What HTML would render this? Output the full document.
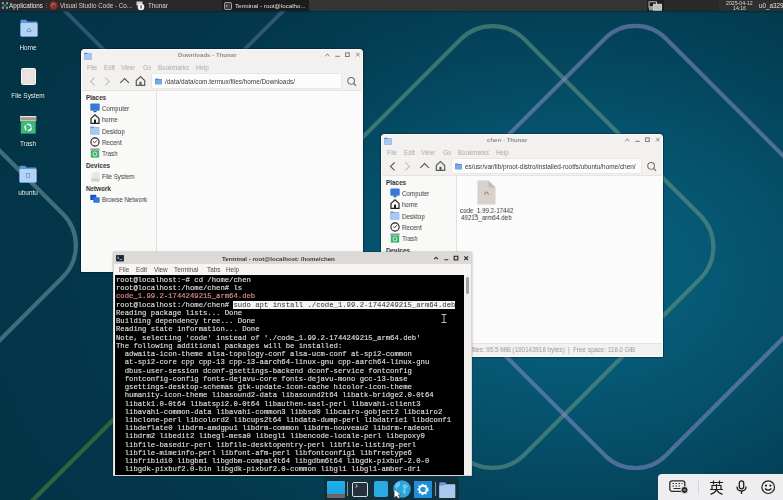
<!DOCTYPE html><html><head><meta charset="utf-8"><style>
*{margin:0;padding:0;box-sizing:border-box}
html,body{width:783px;height:500px;overflow:hidden}
body{position:relative;font-family:"Liberation Sans",sans-serif;background:#043a50;-webkit-font-smoothing:antialiased}
.a{position:absolute}
svg{position:absolute;overflow:visible}
#bg{position:absolute;left:0;top:0;width:783px;height:500px;background:radial-gradient(ellipse 420px 300px at 570px 275px,#06617f 0%,#065a76 30%,#054f69 55%,#04455c 75%,#033c50 95%,#033649 120%,#023446 150%)}
#panel{position:absolute;left:0;top:0;width:783px;height:10.6px;background:linear-gradient(90deg,#2a292a 0,#2a292a 309px,#343434 309px,#343434 647px,#1f1f1f 647px,#1f1f1f 664px,#292929 664px,#292929 719px,#2f2f31 719px);box-shadow:0 .8px 1.5px rgba(0,0,0,.55);color:#e8e8e8;line-height:11px;white-space:nowrap}
#panel span{will-change:transform;position:absolute;top:0}
.dl{will-change:transform;position:absolute;color:#eef2f4;font-size:6.4px;text-align:center;width:60px;line-height:8px;text-shadow:0 0 1.5px rgba(0,0,0,.6)}
.win{position:absolute;background:#f3f1ef;border:1px solid #fbfbfb;border-radius:3px 3px 0 0;overflow:hidden;box-shadow:0 0 0 .6px rgba(0,10,20,.45),0 0 2px rgba(0,0,0,.3)}
.win .t{will-change:transform;position:absolute;top:-1.9px;height:13px;line-height:14px;font-size:6.1px;font-weight:bold;color:#8e8b89;white-space:nowrap}
.win .m{will-change:transform;position:absolute;top:11.5px;height:11px;line-height:11px;font-size:6.9px;color:#aba9a7;white-space:nowrap;transform:scaleX(.9);transform-origin:0 50%}
.side{position:absolute;left:0;top:40px;width:75px;bottom:0;background:#f9f9f8;border-right:1px solid #e3e1df;border-top:1px solid #e6e3e0}
.cont{position:absolute;left:75px;top:40px;right:0;bottom:0;background:#fbfbfb;border-top:1px solid #e6e3e0}
.s{will-change:transform;position:absolute;font-size:6.9px;line-height:8px;white-space:nowrap;color:#3a3a3a;transform:scaleX(.9);transform-origin:0 50%}
.h{font-weight:bold;color:#2b2b2b;font-size:6.9px;transform:scaleX(.92)}
.loc{position:absolute;height:15px;background:#fcfcfc;border:1px solid #e9e6e3;border-radius:2px;overflow:hidden}
.loc span{will-change:transform;position:absolute;top:0;line-height:15px;font-size:6.42px;color:#3a3a3a;white-space:nowrap}
#term{position:absolute;left:113px;top:252px;width:359px;height:224px;background:#f6f5f4;border:1px solid #d9d6d3;border-radius:2px 2px 0 0;overflow:hidden;box-shadow:0 0 2px rgba(0,0,0,.4)}
#tt{position:absolute;left:0;right:0;top:0;height:11px;background:#dcd9d6}
#tt span{will-change:transform;position:absolute;top:0;line-height:12.5px;font-size:6.12px;font-weight:bold;color:#3c3c3c;white-space:nowrap}
#tm span{will-change:transform;position:absolute;top:11px;line-height:12px;font-size:6.4px;color:#4d4d4d;white-space:nowrap}
#tb{position:absolute;left:1px;top:22px;width:349px;height:200px;background:#000;overflow:hidden}
pre{will-change:transform;position:absolute;left:0.7px;top:1.3px;font-family:"Liberation Mono",monospace;font-size:7.25px;line-height:8.24px;color:#e0e0e0;-webkit-text-stroke:0.2px rgba(224,224,224,.6)}
.red{color:#e46a6e}
.sel{background:#f4f4f4;color:#000}
</style></head><body>
<div id="bg"></div>
<svg style="left:0;top:0" width="783" height="500" viewBox="0 0 783 500"><g fill="none" stroke-width="4.2">
<path stroke="#6a9a88" stroke-opacity="0.55" d="M460.7,39.3 A45.0,45.0 0 0 1 524.3,39.3 L700.2,215.2 A45.0,45.0 0 0 1 700.2,278.8 L524.3,454.7 A45.0,45.0 0 0 1 460.7,454.7 L284.8,278.8 A45.0,45.0 0 0 1 284.8,215.2 Z"/>
<path stroke="#8a8cc8" stroke-opacity="0.55" d="M605.0,38.4 A43.0,43.0 0 0 1 665.8,38.4 L843.9,216.5 A43.0,43.0 0 0 1 843.9,277.3 L665.8,455.4 A43.0,43.0 0 0 1 605.0,455.4 L426.9,277.3 A43.0,43.0 0 0 1 426.9,216.5 Z"/>
<path stroke="#7aa6b4" stroke-opacity="0.5" d="M-175.3,39.3 A45.0,45.0 0 0 1 -111.7,39.3 L62.7,213.7 A45.0,45.0 0 0 1 62.7,277.3 L-111.7,451.7 A45.0,45.0 0 0 1 -175.3,451.7 L-349.7,277.3 A45.0,45.0 0 0 1 -349.7,213.7 Z"/>
<path stroke="#7f8cc0" stroke-opacity="0.36" stroke-width="4" d="M20,-34 L142.2,88.2 A45.0,45.0 0 0 0 205.8,88.2 L330,-36"/>
<path stroke="#2f6242" stroke-opacity="1" d="M-10,543 L300,233"/>
</g></svg>
<div id="panel">
  <svg style="left:1px;top:1px" width="8" height="9" viewBox="0 0 8 9">
    <path d="M1,1.5 Q2.2,0.5 3.2,2 L2.6,3.4 Q1.4,3.6 0.8,3 Z M7,1.5 Q5.8,0.5 4.8,2 L5.4,3.4 Q6.6,3.6 7.2,3 Z M1,7.5 Q2.2,8.5 3.2,7 L2.6,5.6 Q1.4,5.4 0.8,6 Z M7,7.5 Q5.8,8.5 4.8,7 L5.4,5.6 Q6.6,5.4 7.2,6 Z" fill="#5fb3c7"/>
    <rect x="2.6" y="3.8" width="2.8" height="1.4" fill="#3a7f95"/>
  </svg>
  <span style="left:9px;font-size:6.3px">Applications</span>
  <span style="left:44px;font-size:5px;color:#999">&#8942;</span>
  <svg style="left:48.5px;top:1px" width="9" height="9" viewBox="0 0 9 9"><circle cx="4.5" cy="4.6" r="4.3" fill="#7a3026"/><circle cx="4.3" cy="4.2" r="2.4" fill="#b0584a"/><circle cx="4.6" cy="5" r="1" fill="#5a2018"/></svg>
  <span style="left:60px;font-size:6.28px;color:#cfcfcf">Visual Studio Code - Co...</span>
  <svg style="left:136px;top:1px" width="9" height="10" viewBox="0 0 9 10"><rect x="0.5" y="0.5" width="6" height="4" fill="#cfd3d8"/><circle cx="5" cy="6" r="3.3" fill="#f2f2f2"/><rect x="4.5" y="4.3" width="1.1" height="3.2" fill="#333"/></svg>
  <span style="left:148px;font-size:6.28px;color:#d6d6d6">Thunar</span>
  <div class="a" style="left:221.5px;top:0;width:87.5px;height:10.6px;background:#1d1c1d"></div>
  <svg style="left:224px;top:2px" width="8" height="8" viewBox="0 0 8 8"><rect x="0.5" y="0.5" width="7" height="7" rx="1" fill="#3c3c3c" stroke="#bbb" stroke-width="0.8"/><path d="M2,3 L3.3,4 L2,5" stroke="#ddd" stroke-width="0.7" fill="none"/></svg>
  <span style="left:235px;font-size:6.2px;color:#e0e0e0">Terminal - root@localho...</span>
  <svg style="left:648px;top:1px" width="15" height="10" viewBox="0 0 15 10"><rect x="1" y="0.8" width="7.5" height="5.5" fill="none" stroke="#cfcfcf" stroke-width="0.9"/><rect x="5.5" y="3.2" width="8" height="6" fill="#bdbdbd" stroke="#e4e4e4" stroke-width="0.8"/><rect x="1" y="5" width="4" height="4.3" fill="#9a9a9a"/></svg>
  
  <span style="left:726px;top:-2.5px;font-size:5.2px;color:#d8d8d8">2025-04-12</span>
  <span style="left:733px;top:2.6px;font-size:5.2px;color:#d8d8d8">14:16</span>
  <span style="left:759px;font-size:6.3px;color:#e0e0e0">u0_a329</span>
</div>
<svg style="left:19.5px;top:19.2px" width="18" height="18" viewBox="0 0 18 18"><path d="M0.5,2 Q0.5,0.8 1.7,0.8 L6,0.8 L7.5,2.5 L16.5,2.5 Q17.5,2.5 17.5,3.5 L17.5,16.5 Q17.5,17.5 16.5,17.5 L1.5,17.5 Q0.5,17.5 0.5,16.5 Z" fill="#5b95de"/><rect x="0.5" y="4" width="17" height="13.5" rx="1" fill="#b3d2f6"/><path d="M7,11 Q9,8 11,11 L11,12.5 L7,12.5 Z" fill="none" stroke="#5f8fc8" stroke-width="0.8"/></svg>
<div class="dl" style="left:-2px;top:43.6px">Home</div>
<div class="a" style="left:20.7px;top:67.6px;width:15.2px;height:17.4px;background:radial-gradient(circle at 50% 45%,#eee6e2,#e2ddd8);border:1px solid #fbfbfb;border-radius:1.5px"></div>
<div class="dl" style="left:-2px;top:91.6px">File System</div>
<svg style="left:20px;top:116px" width="16.5" height="18" viewBox="0 0 16.5 18"><rect x="0" y="0" width="16.3" height="5" fill="#e8e4e2"/><rect x="0.3" y="1.2" width="15.7" height="3.3" fill="#a59690"/><rect x="0.8" y="5" width="14.9" height="12.6" fill="#3cb878"/><circle cx="8.2" cy="11.4" r="3.1" fill="none" stroke="#f0fff4" stroke-width="1.5" stroke-dasharray="5 1.5"/></svg>
<div class="dl" style="left:-2px;top:139.8px">Trash</div>
<svg style="left:19px;top:165px" width="18" height="18" viewBox="0 0 18 18"><path d="M0.5,2 Q0.5,0.8 1.7,0.8 L6,0.8 L7.5,2.5 L16.5,2.5 Q17.5,2.5 17.5,3.5 L17.5,16.5 Q17.5,17.5 16.5,17.5 L1.5,17.5 Q0.5,17.5 0.5,16.5 Z" fill="#5b95de"/><rect x="0.5" y="4" width="17" height="13.5" rx="1" fill="#b3d2f6"/><rect x="7.3" y="8.5" width="3.4" height="4" fill="none" stroke="#5f8fc8" stroke-width="0.7"/></svg>
<div class="dl" style="left:-2px;top:188.8px">ubuntu</div>
<div class="win" style="left:81px;top:49px;width:282px;height:223px">
<svg style="left:1.6px;top:2.3px" width="8" height="8.2" viewBox="0 0 18 16"><path d="M0.5,1.5 Q0.5,0.5 1.5,0.5 L6.5,0.5 L8,2 L16.5,2 Q17.5,2 17.5,3 L17.5,15 Q17.5,15.5 17,15.5 L1,15.5 Q0.5,15.5 0.5,15 Z" fill="#4f7fc8"/><rect x="0.5" y="3.2" width="17" height="12.3" rx="0.8" fill="#a6c8f2"/></svg>
<div class="t" style="left:95.7px">Downloads - Thunar</div>
<svg style="left:242px;top:1.3px" width="40" height="9" viewBox="0 0 40 9" fill="none" stroke="#7a7a7a" stroke-width="0.9"><path d="M1.3,5.4 L3.3,2.8 L5.3,5.4"/><path d="M11.3,5.3 L15.8,5.3" stroke-width="1"/><rect x="21.6" y="1.9" width="3.6" height="3.6" stroke-width="1"/><path d="M32,1.8 L35.6,5.5 M35.6,1.8 L32,5.5"/></svg>
<div class="m" style="left:5.2px">File</div>
<div class="m" style="left:21.9px">Edit</div>
<div class="m" style="left:39.3px">View</div>
<div class="m" style="left:60.9px">Go</div>
<div class="m" style="left:75.9px">Bookmarks</div>
<div class="m" style="left:114.4px">Help</div>
<svg style="left:7px;top:26.4px" width="60" height="11" viewBox="0 0 60 11" fill="none" stroke-width="1.1"><path d="M5.6,1.5 L1.5,5.4 L5.6,9.3" stroke="#bdbdbd"/><path d="M16.3,1.5 L20.4,5.4 L16.3,9.3" stroke="#c2c2c2"/><path d="M31.3,6.8 L35.6,2.6 L39.9,6.8" stroke="#555"/><path d="M47.3,9.3 L47.3,4.6 L51.5,0.6 L55.7,4.6 L55.7,9.3 Z" stroke="#5c5c5c" stroke-width="1.2"/><rect x="50.4" y="5.8" width="2.2" height="3.5" fill="#5c5c5c" stroke="none"/></svg>
<div class="loc" style="left:69.3px;top:23.2px;width:190.7px;height:16.3px">
<svg style="left:2.6px;top:3.8px" width="7" height="6.8" viewBox="0 0 18 16"><path d="M0.5,1.5 Q0.5,0.5 1.5,0.5 L6.5,0.5 L8,2 L16.5,2 Q17.5,2 17.5,3 L17.5,15 Q17.5,15.5 17,15.5 L1,15.5 Q0.5,15.5 0.5,15 Z" fill="#3f74c9"/><rect x="0.5" y="3.2" width="17" height="12.3" rx="0.8" fill="#7aa7e6"/></svg>
<span style="left:13px">/data/data/com.termux/files/home/Downloads/</span></div>
<svg style="left:264px;top:25.8px" width="12" height="11" viewBox="0 0 12 11" fill="none" stroke="#707070" stroke-width="1.05"><circle cx="5.1" cy="4.9" r="3.4"/><path d="M7.5,7.4 L10,9.8" stroke-width="1.3"/></svg>
<div class="side">
<div class="s h" style="left:4px;top:2.6px">Places</div>
<div class="s" style="left:20px;top:14.1px">Computer</div>
<svg style="left:8.2px;top:12.4px" width="10" height="10" viewBox="0 0 10 10"><rect x="0.3" y="0.5" width="9.4" height="7.3" rx="1" fill="#3a78d6"/><rect x="3.5" y="7.8" width="3" height="1.4" fill="#2b5fae"/></svg>
<div class="s" style="left:20px;top:25.1px">home</div>
<svg style="left:8.2px;top:23.4px" width="10" height="10" viewBox="0 0 10 10"><path d="M1,9.3 L1,4.4 L5,0.8 L9,4.4 L9,9.3 Z" fill="none" stroke="#1f1f1f" stroke-width="1.2"/><rect x="4" y="5.6" width="2" height="3.8" fill="#1f1f1f"/></svg>
<div class="s" style="left:20px;top:36.6px">Desktop</div>
<svg style="left:8.4px;top:35.4px" width="9.5" height="9" viewBox="0 0 18 16"><path d="M0.5,1.5 Q0.5,0.5 1.5,0.5 L6.5,0.5 L8,2 L16.5,2 Q17.5,2 17.5,3 L17.5,15 Q17.5,15.5 17,15.5 L1,15.5 Q0.5,15.5 0.5,15 Z" fill="#6d9fe0"/><rect x="0.5" y="3.2" width="17" height="12.3" rx="0.8" fill="#a7c9f1"/></svg>
<div class="s" style="left:20px;top:47.9px">Recent</div>
<svg style="left:8.2px;top:46.199999999999996px" width="10" height="10" viewBox="0 0 10 10"><circle cx="5" cy="5" r="4.1" fill="#fff" stroke="#1f1f1f" stroke-width="1.1"/><path d="M3.2,4.6 L4.6,5.8 L6.9,3.3" fill="none" stroke="#1f1f1f" stroke-width="0.9"/></svg>
<div class="s" style="left:20px;top:58.9px">Trash</div>
<svg style="left:8.4px;top:57.199999999999996px" width="10" height="10" viewBox="0 0 10 10"><rect x="0.4" y="0.4" width="9.2" height="2" fill="#9c9c9c"/><rect x="0.8" y="2.4" width="8.4" height="7.2" fill="#3bb26a"/><circle cx="5" cy="6" r="2" fill="none" stroke="#d9f2e1" stroke-width="0.9"/></svg>
<div class="s h" style="left:4px;top:70.89999999999999px">Devices</div>
<div class="s" style="left:20px;top:82.19999999999999px">File System</div>
<svg style="left:8.8px;top:80.5px" width="9" height="10" viewBox="0 0 9 10"><path d="M0.5,9.5 L0.5,2 L3,0.3 L8.5,0.3 L8.5,9.5 Z" fill="#e9e7e4"/><rect x="0.5" y="6.5" width="8" height="3" fill="#d4d0cc"/></svg>
<div class="s h" style="left:4px;top:93.69999999999999px">Network</div>
<div class="s" style="left:20px;top:105.0px">Browse Network</div>
<svg style="left:8.2px;top:103.30000000000001px" width="10" height="10" viewBox="0 0 10 10"><rect x="0.3" y="0.8" width="6" height="5.2" rx="0.6" fill="#1f55b8"/><rect x="3.3" y="3.2" width="6.4" height="5.6" rx="0.6" fill="#3579d8"/></svg>
</div>
<div class="cont"></div>
</div>
<div class="win" style="left:381px;top:134px;width:282px;height:223px">
<svg style="left:1.6px;top:2.3px" width="8" height="8.2" viewBox="0 0 18 16"><path d="M0.5,1.5 Q0.5,0.5 1.5,0.5 L6.5,0.5 L8,2 L16.5,2 Q17.5,2 17.5,3 L17.5,15 Q17.5,15.5 17,15.5 L1,15.5 Q0.5,15.5 0.5,15 Z" fill="#4f7fc8"/><rect x="0.5" y="3.2" width="17" height="12.3" rx="0.8" fill="#a6c8f2"/></svg>
<div class="t" style="left:104.8px">chen - Thunar</div>
<svg style="left:242px;top:1.3px" width="40" height="9" viewBox="0 0 40 9" fill="none" stroke="#7a7a7a" stroke-width="0.9"><path d="M1.3,5.4 L3.3,2.8 L5.3,5.4"/><path d="M11.3,5.3 L15.8,5.3" stroke-width="1"/><rect x="21.6" y="1.9" width="3.6" height="3.6" stroke-width="1"/><path d="M32,1.8 L35.6,5.5 M35.6,1.8 L32,5.5"/></svg>
<div class="m" style="left:5.2px">File</div>
<div class="m" style="left:21.9px">Edit</div>
<div class="m" style="left:39.3px">View</div>
<div class="m" style="left:60.9px">Go</div>
<div class="m" style="left:75.9px">Bookmarks</div>
<div class="m" style="left:114.4px">Help</div>
<svg style="left:7px;top:26.4px" width="60" height="11" viewBox="0 0 60 11" fill="none" stroke-width="1.1"><path d="M5.6,1.5 L1.5,5.4 L5.6,9.3" stroke="#555555"/><path d="M16.3,1.5 L20.4,5.4 L16.3,9.3" stroke="#c2c2c2"/><path d="M31.3,6.8 L35.6,2.6 L39.9,6.8" stroke="#555"/><path d="M47.3,9.3 L47.3,4.6 L51.5,0.6 L55.7,4.6 L55.7,9.3 Z" stroke="#5c5c5c" stroke-width="1.2"/><rect x="50.4" y="5.8" width="2.2" height="3.5" fill="#5c5c5c" stroke="none"/></svg>
<div class="loc" style="left:69.3px;top:23.2px;width:190.7px;height:16.3px">
<svg style="left:2.6px;top:3.8px" width="7" height="6.8" viewBox="0 0 18 16"><path d="M0.5,1.5 Q0.5,0.5 1.5,0.5 L6.5,0.5 L8,2 L16.5,2 Q17.5,2 17.5,3 L17.5,15 Q17.5,15.5 17,15.5 L1,15.5 Q0.5,15.5 0.5,15 Z" fill="#3f74c9"/><rect x="0.5" y="3.2" width="17" height="12.3" rx="0.8" fill="#7aa7e6"/></svg>
<span style="left:13px">es/usr/var/lib/proot-distro/installed-rootfs/ubuntu/home/chen/</span></div>
<svg style="left:264px;top:25.8px" width="12" height="11" viewBox="0 0 12 11" fill="none" stroke="#707070" stroke-width="1.05"><circle cx="5.1" cy="4.9" r="3.4"/><path d="M7.5,7.4 L10,9.8" stroke-width="1.3"/></svg>
<div class="side">
<div class="s h" style="left:4px;top:2.6px">Places</div>
<div class="s" style="left:20px;top:14.1px">Computer</div>
<svg style="left:8.2px;top:12.4px" width="10" height="10" viewBox="0 0 10 10"><rect x="0.3" y="0.5" width="9.4" height="7.3" rx="1" fill="#3a78d6"/><rect x="3.5" y="7.8" width="3" height="1.4" fill="#2b5fae"/></svg>
<div class="s" style="left:20px;top:25.1px">home</div>
<svg style="left:8.2px;top:23.4px" width="10" height="10" viewBox="0 0 10 10"><path d="M1,9.3 L1,4.4 L5,0.8 L9,4.4 L9,9.3 Z" fill="none" stroke="#1f1f1f" stroke-width="1.2"/><rect x="4" y="5.6" width="2" height="3.8" fill="#1f1f1f"/></svg>
<div class="s" style="left:20px;top:36.6px">Desktop</div>
<svg style="left:8.4px;top:35.4px" width="9.5" height="9" viewBox="0 0 18 16"><path d="M0.5,1.5 Q0.5,0.5 1.5,0.5 L6.5,0.5 L8,2 L16.5,2 Q17.5,2 17.5,3 L17.5,15 Q17.5,15.5 17,15.5 L1,15.5 Q0.5,15.5 0.5,15 Z" fill="#6d9fe0"/><rect x="0.5" y="3.2" width="17" height="12.3" rx="0.8" fill="#a7c9f1"/></svg>
<div class="s" style="left:20px;top:47.9px">Recent</div>
<svg style="left:8.2px;top:46.199999999999996px" width="10" height="10" viewBox="0 0 10 10"><circle cx="5" cy="5" r="4.1" fill="#fff" stroke="#1f1f1f" stroke-width="1.1"/><path d="M3.2,4.6 L4.6,5.8 L6.9,3.3" fill="none" stroke="#1f1f1f" stroke-width="0.9"/></svg>
<div class="s" style="left:20px;top:58.9px">Trash</div>
<svg style="left:8.4px;top:57.199999999999996px" width="10" height="10" viewBox="0 0 10 10"><rect x="0.4" y="0.4" width="9.2" height="2" fill="#9c9c9c"/><rect x="0.8" y="2.4" width="8.4" height="7.2" fill="#3bb26a"/><circle cx="5" cy="6" r="2" fill="none" stroke="#d9f2e1" stroke-width="0.9"/></svg>
<div class="s h" style="left:4px;top:70.89999999999999px">Devices</div>
<div class="s" style="left:20px;top:82.19999999999999px">File System</div>
<svg style="left:8.8px;top:80.5px" width="9" height="10" viewBox="0 0 9 10"><path d="M0.5,9.5 L0.5,2 L3,0.3 L8.5,0.3 L8.5,9.5 Z" fill="#e9e7e4"/><rect x="0.5" y="6.5" width="8" height="3" fill="#d4d0cc"/></svg>
<div class="s h" style="left:4px;top:93.69999999999999px">Network</div>
<div class="s" style="left:20px;top:105.0px">Browse Network</div>
<svg style="left:8.2px;top:103.30000000000001px" width="10" height="10" viewBox="0 0 10 10"><rect x="0.3" y="0.8" width="6" height="5.2" rx="0.6" fill="#1f55b8"/><rect x="3.3" y="3.2" width="6.4" height="5.6" rx="0.6" fill="#3579d8"/></svg>
</div>
<div class="cont"></div>
<svg style="left:95px;top:44.5px" width="19" height="25" viewBox="0 0 20 25" preserveAspectRatio="none"><path d="M0.5,0.5 L12,0.5 L19.5,7.5 L19.5,24.5 L0.5,24.5 Z" fill="#d8d0ca"/><path d="M12,0.5 L12,7.5 L19.5,7.5 Z" fill="#c4bbb4"/><path d="M8.3,13 Q10,10.8 11.7,13 L11.7,14.5 M8.3,13 L8.3,14.5" fill="none" stroke="#6d6661" stroke-width="0.8"/></svg>
<div class="s" style="left:78px;top:72.3px;color:#3a3a3a;font-size:6.88px">code_1.99.2-17442</div>
<div class="s" style="left:79px;top:79.3px;color:#3a3a3a;font-size:6.95px">49215_arm64.deb</div>
<div class="a" style="left:0;top:208px;width:282px;height:15px;background:#f3f1ef;border-top:1px solid #e6e3e0"></div>
<div class="s" style="left:61.2px;top:210.6px;color:#9a9896;font-size:6.93px">Size of all files: 95.5 MiB (100143918 bytes) &nbsp;|&nbsp; Free space: 118.0 GiB</div>
</div>
<div id="term">
  <div id="tt"><span style="left:108.4px">Terminal - root@localhost: /home/chen</span></div>
  <svg style="left:2px;top:2.4px" width="8" height="6.5" viewBox="0 0 9 8" preserveAspectRatio="none"><rect x="0" y="0" width="9" height="8" rx="0.8" fill="#2c3e50"/><rect x="0.6" y="0.6" width="7.8" height="6.8" fill="#1d2733"/><path d="M1.6,2.2 L3.4,3.5 L1.6,4.8" stroke="#dfe6ee" stroke-width="0.8" fill="none"/><path d="M4,5.6 L7,5.6" stroke="#dfe6ee" stroke-width="0.7"/></svg>
  <svg style="left:318px;top:1.2px" width="40" height="9" viewBox="0 0 40 9" fill="none" stroke="#333" stroke-width="1.1">
    <path d="M2.2,5.2 L4.1,3.3 L6,5.2"/><path d="M12.2,5.8 L16.2,5.8"/><rect x="22.2" y="2.3" width="3.6" height="3.6" stroke-width="1.2"/><path d="M32.3,2.3 L36,6 M36,2.3 L32.3,6" stroke-width="1.15"/></svg>
  <div id="tm"><span style="left:4.8px">File</span><span style="left:21.7px">Edit</span><span style="left:39.6px">View</span><span style="left:60.3px">Terminal</span><span style="left:92.5px">Tabs</span><span style="left:111.6px">Help</span></div>
  <div id="tb">
<pre>root@localhost:~# cd /home/chen
root@localhost:/home/chen# ls
<span class="red">code_1.99.2-1744249215_arm64.deb</span>
root@localhost:/home/chen# <span class="sel">sudo apt install ./code_1.99.2-1744249215_arm64.deb</span>
Reading package lists... Done
Building dependency tree... Done
Reading state information... Done
Note, selecting 'code' instead of './code_1.99.2-1744249215_arm64.deb'
The following additional packages will be installed:
  adwaita-icon-theme alsa-topology-conf alsa-ucm-conf at-spi2-common
  at-spi2-core cpp cpp-13 cpp-13-aarch64-linux-gnu cpp-aarch64-linux-gnu
  dbus-user-session dconf-gsettings-backend dconf-service fontconfig
  fontconfig-config fonts-dejavu-core fonts-dejavu-mono gcc-13-base
  gsettings-desktop-schemas gtk-update-icon-cache hicolor-icon-theme
  humanity-icon-theme libasound2-data libasound2t64 libatk-bridge2.0-0t64
  libatk1.0-0t64 libatspi2.0-0t64 libauthen-sasl-perl libavahi-client3
  libavahi-common-data libavahi-common3 libbsd0 libcairo-gobject2 libcairo2
  libclone-perl libcolord2 libcups2t64 libdata-dump-perl libdatrie1 libdconf1
  libdeflate0 libdrm-amdgpu1 libdrm-common libdrm-nouveau2 libdrm-radeon1
  libdrm2 libedit2 libegl-mesa0 libegl1 libencode-locale-perl libepoxy0
  libfile-basedir-perl libfile-desktopentry-perl libfile-listing-perl
  libfile-mimeinfo-perl libfont-afm-perl libfontconfig1 libfreetype6
  libfribidi0 libgbm1 libgdbm-compat4t64 libgdbm6t64 libgdk-pixbuf-2.0-0
  libgdk-pixbuf2.0-bin libgdk-pixbuf2.0-common libgl1 libgl1-amber-dri</pre>
  </div>
  <div class="a" style="left:350px;top:22px;width:8px;height:200px;background:#f0efee"></div>
  <div class="a" style="left:352.3px;top:24px;width:3.2px;height:17px;background:#a2a2a2;border-radius:1.5px"></div>
  <svg style="left:327px;top:61px" width="6" height="9" viewBox="0 0 6 9" fill="none" stroke="#cfcfcf" stroke-width="0.9"><path d="M0.5,0.5 L5.5,0.5 M3,0.5 L3,8.5 M0.5,8.5 L5.5,8.5"/></svg>
</div>
<div class="a" style="left:323.5px;top:477px;width:135px;height:23px;background:rgba(28,36,42,.6);border-radius:3px 3px 0 0"></div>
<div class="a" style="left:327px;top:480.6px;width:17.5px;height:17px;background:linear-gradient(#22b0ea 0,#1aa3e0 74%,#66625e 74%,#6e6a66 100%);border-radius:1px"></div>
<div class="a" style="left:347px;top:482px;width:1.2px;height:14px;background:#8a8f93"></div>
<div class="a" style="left:352px;top:482px;width:16px;height:15px;background:#26313b;border:1.2px solid #d9dde0;border-radius:2px"></div>
<svg style="left:355px;top:484px" width="6" height="5" viewBox="0 0 6 5" fill="none" stroke="#e4e8ea" stroke-width="0.8"><path d="M0.5,0.5 L2.5,2 L0.5,3.5"/></svg>
<div class="a" style="left:374px;top:481px;width:14px;height:16px;background:#2aa9e2;border-radius:2px"></div>
<svg style="left:393px;top:480px" width="18" height="18" viewBox="0 0 18 18"><circle cx="9" cy="9" r="8.8" fill="#2aa6dc"/><path d="M6,1.5 Q8,4 6.5,6 Q4,7 3.5,9.5 Q2.5,7 1.5,6 Q3,2.5 6,1.5 Z M10.5,4 Q13,3.5 15,6 Q14,8.5 12,9 Q13.5,11 12.5,14 Q10.5,15 10,12.5 Q9.5,10 10.8,8.5 Q9,7 10.5,4 Z" fill="#6cc8ee"/><path d="M1.2,9 L1.2,18 L3.3,16 L5.2,18.5 L6.8,17.6 L5,15 L7.8,14.6 Z" fill="#fff" stroke="#2a2a2a" stroke-width="0.5"/></svg>
<div class="a" style="left:414px;top:481px;width:18px;height:17px;background:#1e8fd8"></div>
<svg style="left:416px;top:482px" width="14" height="15" viewBox="0 0 14 15"><circle cx="7" cy="7.5" r="4.2" fill="none" stroke="#fff" stroke-width="2.6" stroke-dasharray="1.8 1.2"/><circle cx="7" cy="7.5" r="3.6" fill="none" stroke="#fff" stroke-width="1.6"/></svg>
<div class="a" style="left:435px;top:482px;width:1.2px;height:14px;background:#8a8f93"></div>
<svg style="left:439px;top:481.5px" width="16.5" height="16" viewBox="0 0 16.5 16"><path d="M0.3,1.3 Q0.3,0.3 1.3,0.3 L6,0.3 L7.5,2 L15.3,2 Q16.2,2 16.2,3 L16.2,16 L0.3,16 Z" fill="#6f9bd6"/><path d="M0.3,4 L7.5,2.8 L16.2,2.8 L16.2,15.2 Q16.2,16 15.4,16 L1.1,16 Q0.3,16 0.3,15.2 Z" fill="#a9c9ef"/></svg>
<div class="a" style="left:658px;top:474px;width:130px;height:30px;background:#eeeef0;border-radius:4px"></div>
<svg style="left:669px;top:480px" width="20" height="14" viewBox="0 0 20 14"><rect x="0.8" y="0.8" width="15" height="10.5" rx="2.2" fill="none" stroke="#2a2a2a" stroke-width="1.3"/><path d="M3.5,3.5 h1.5 M6.5,3.5 h1.5 M9.5,3.5 h1.5 M12.5,3.5 h1 M3.5,6 h1.5 M6.5,6 h1.5 M9.5,6 h1.5 M4.5,8.5 h7" stroke="#2a2a2a" stroke-width="1"/><circle cx="15.5" cy="10" r="3.5" fill="#2a2a2a" stroke="#eeeef0" stroke-width="0.8"/><path d="M14,10 h3" stroke="#eee" stroke-width="0.7"/></svg>
<div class="a" style="left:698px;top:480px;width:1px;height:14px;background:#d6d6d8"></div>
<svg style="left:709px;top:480px" width="15" height="15" viewBox="0 0 15 15" fill="none" stroke="#1f1f1f" stroke-width="1.2"><path d="M1,2.5 h13 M4.5,0.5 v4 M10.5,0.5 v4 M3,5.5 h9 v4 h-9 z M7.5,4 v6 M1,9.5 h13 M7.5,9.8 Q6,13 1.5,14.3 M7.5,9.8 Q9,13 13.5,14.3"/></svg>
<svg style="left:736px;top:480px" width="11" height="15" viewBox="0 0 11 15" fill="none" stroke="#1f1f1f" stroke-width="1.3"><rect x="3.3" y="0.8" width="4.4" height="8" rx="2.2"/><path d="M1,6.5 Q1,11 5.5,11 Q10,11 10,6.5 M5.5,11 v3"/></svg>
<svg style="left:761px;top:480px" width="15" height="15" viewBox="0 0 15 15" fill="none" stroke="#1f1f1f" stroke-width="1.2"><circle cx="7.2" cy="7.2" r="6.3"/><circle cx="5" cy="5.6" r="0.5" fill="#1f1f1f"/><circle cx="9.4" cy="5.6" r="0.5" fill="#1f1f1f"/><path d="M4,8.5 Q7.2,11.8 10.4,8.5"/></svg>
</body></html>
